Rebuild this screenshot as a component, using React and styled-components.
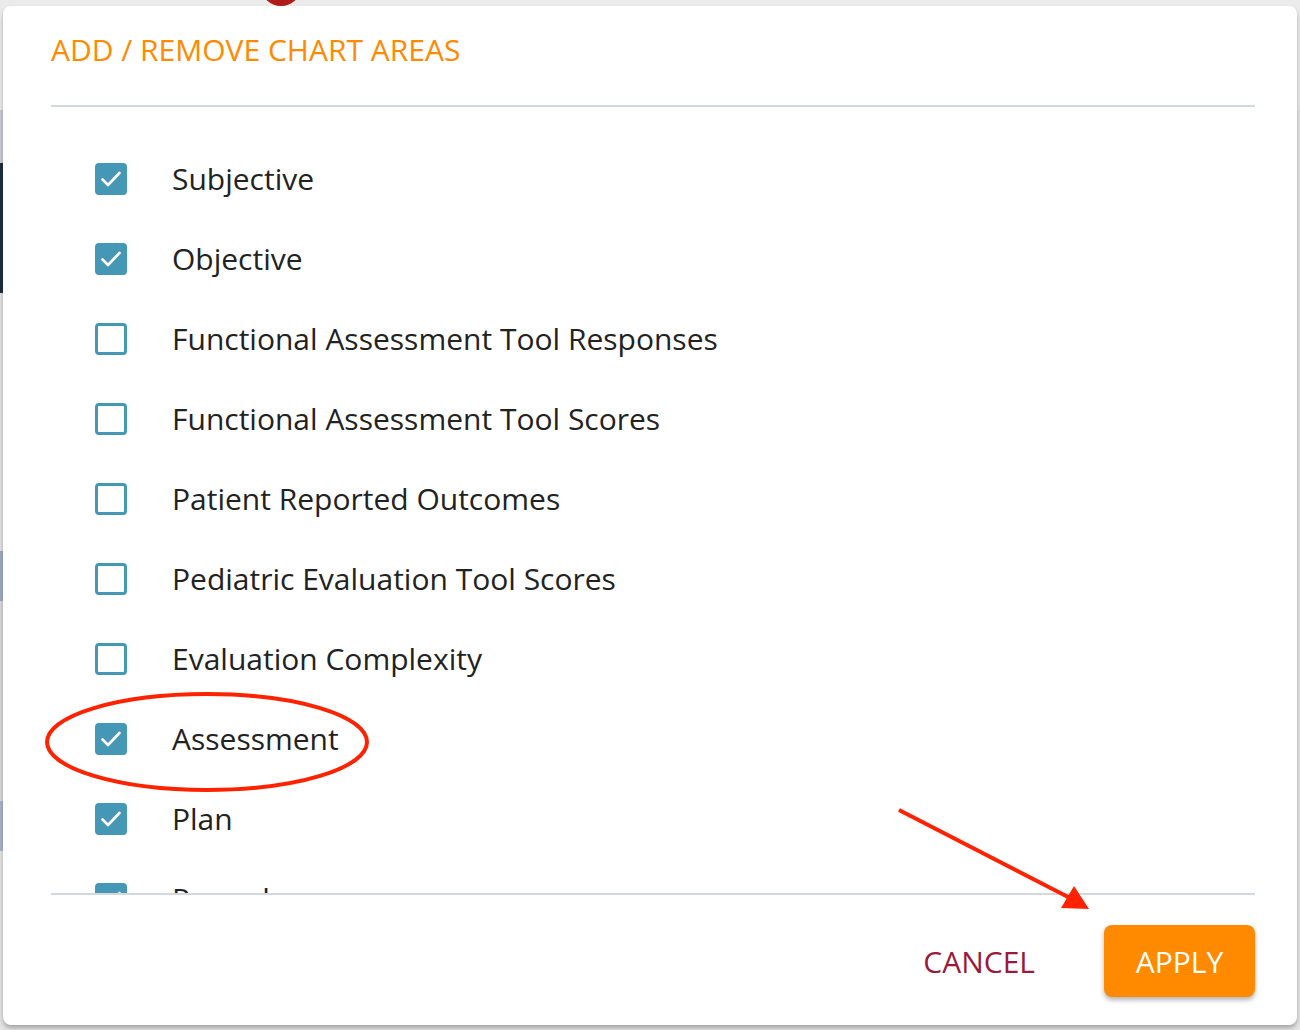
import React, { useState } from 'react'
import styled, { createGlobalStyle } from 'styled-components'

const GlobalStyle = createGlobalStyle`
  html, body {
    margin: 0;
    padding: 0;
    background: #e4e4e4;
    font-family: "Open Sans", "Liberation Sans", sans-serif;
  }
  * { box-sizing: border-box; }
`

const Page = styled.div`
  position: relative;
  width: 1300px;
  height: 1030px;
  overflow: hidden;
  background: #e6e6e6;
`

// what is left visible of the app behind the dialog
const Behind = styled.div`
  display: flex;
  flex-direction: column;
  height: 100%;
`
const TopBar = styled.div`
  height: 110px;
  flex-shrink: 0;
  padding-left: 261px;
  background: #ebebeb;
`
const Avatar = styled.div`
  width: 40px;
  height: 40px;
  margin-top: -34px;
  border-radius: 50%;
  background: #b01b1b;
`
const BehindBody = styled.div`
  flex: 1;
  display: flex;
  background: #e4e4e4;
`
const Rail = styled.div`
  width: 3px;
  display: flex;
  flex-direction: column;
`
const Band = styled.div`
  height: ${(p) => p.h}px;
  flex-shrink: 0;
  background: ${(p) => p.bg};
`

const Modal = styled.div`
  position: absolute;
  top: 6px;
  left: 3px;
  right: 3px;
  bottom: 5px;
  display: flex;
  flex-direction: column;
  background: #fff;
  border-radius: 8px;
  box-shadow: 0 3px 4px rgba(0, 0, 0, 0.28);
  padding: 0 42px 0 48px;
`
const Header = styled.div`
  height: 101px;
  display: flex;
  align-items: center;
  padding-bottom: 12px;
  border-bottom: 2px solid #d3d8e0;
`
const Title = styled.h2`
  margin: 0;
  font-size: 30px;
  font-weight: 400;
  color: #ff8a00;
`
const List = styled.div`
  flex: 1;
  overflow: hidden;
  padding: 32px 0 0 44px;
`
const Row = styled.label`
  height: 80px;
  display: flex;
  align-items: center;
  gap: 45px;
  cursor: pointer;
`
const Box = styled.span`
  width: 32px;
  height: 32px;
  flex-shrink: 0;
  border-radius: 4px;
  background: ${(p) => (p.checked ? '#4597b6' : '#fff')};
  border: 3px solid #4597b6;
  display: flex;
  align-items: center;
  justify-content: center;
`
const Label = styled.span`
  font-size: 30px;
  color: #222;
  margin-top: -2px;
`
const Footer = styled.div`
  border-top: 2px solid #d3d8e0;
  display: flex;
  justify-content: flex-end;
  align-items: center;
  gap: 69px;
  padding: 30px 0 28px;
`
const TextButton = styled.button`
  border: 0;
  background: none;
  padding: 0;
  font-family: inherit;
  font-size: 30px;
  color: #9b1a3b;
  cursor: pointer;
`
const ApplyButton = styled.button`
  width: 151px;
  height: 72px;
  border: 0;
  border-radius: 8px;
  background: #ff8a00;
  color: #fff;
  font-family: inherit;
  font-size: 30px;
  box-shadow: 0 3px 5px rgba(0, 0, 0, 0.3);
  cursor: pointer;
`
const Annotations = styled.svg`
  position: absolute;
  top: 0;
  left: 0;
  pointer-events: none;
`

const areas = [
  { name: 'Subjective', on: true },
  { name: 'Objective', on: true },
  { name: 'Functional Assessment Tool Responses', on: false },
  { name: 'Functional Assessment Tool Scores', on: false },
  { name: 'Patient Reported Outcomes', on: false },
  { name: 'Pediatric Evaluation Tool Scores', on: false },
  { name: 'Evaluation Complexity', on: false },
  { name: 'Assessment', on: true },
  { name: 'Plan', on: true },
  { name: 'Procedures', on: true },
]

const Check = () => (
  <svg width="22" height="18" viewBox="0 0 22 18" fill="none">
    <path d="M2.5 9.5 L8 15 L19.5 3" stroke="#fff" strokeWidth="2.6" strokeLinecap="round" strokeLinejoin="round" />
  </svg>
)

const App = () => {
  const [items, setItems] = useState(areas)

  const toggle = (i) => {
    setItems(items.map((it, idx) => (idx === i ? { ...it, on: !it.on } : it)))
  }

  return (
    <Page>
      <GlobalStyle />
      <Behind>
        <TopBar>
          <Avatar />
        </TopBar>
        <BehindBody>
          <Rail>
            <Band h={53} bg="#c9ccd2" />
            <Band h={130} bg="#1e2e3f" />
            <Band h={258} bg="#e2e2e2" />
            <Band h={50} bg="#9eabc6" />
            <Band h={200} bg="#d9d9d9" />
            <Band h={50} bg="#a9b5cc" />
          </Rail>
        </BehindBody>
      </Behind>

      <Modal>
        <Header>
          <Title>ADD / REMOVE CHART AREAS</Title>
        </Header>
        <List>
          {items.map((it, i) => (
            <Row key={it.name} onClick={() => toggle(i)}>
              <Box checked={it.on}>{it.on && <Check />}</Box>
              <Label>{it.name}</Label>
            </Row>
          ))}
        </List>
        <Footer>
          <TextButton>CANCEL</TextButton>
          <ApplyButton>APPLY</ApplyButton>
        </Footer>
      </Modal>

      {/* red markup drawn over the screenshot */}
      <Annotations width="1300" height="1030">
        <ellipse cx="207" cy="742" rx="160" ry="48" fill="none" stroke="#ff2200" strokeWidth="4" />
        <line x1="899" y1="810" x2="1072" y2="899" stroke="#ff2200" strokeWidth="4" />
        <polygon points="1089,909 1061,908 1074,886" fill="#ff2200" />
      </Annotations>
    </Page>
  )
}

export default App
